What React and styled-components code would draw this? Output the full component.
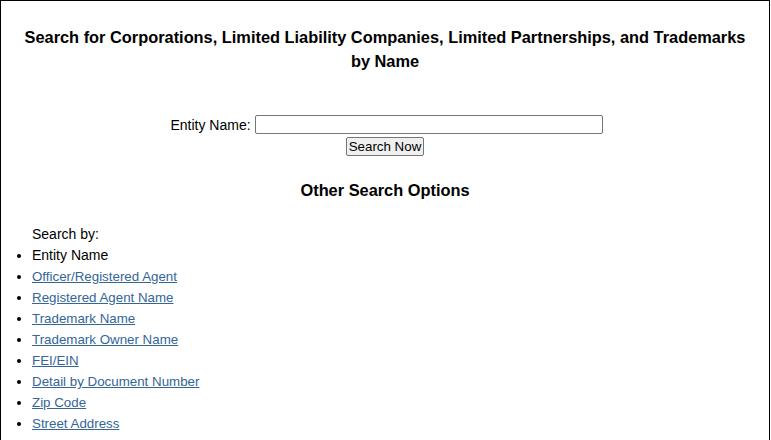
import React from "react";
import styled, { createGlobalStyle } from "styled-components";

const GlobalStyle = createGlobalStyle`
  body {
    margin: 0;
    background: #fff;
    font-family: "Liberation Sans", Arial, sans-serif;
    font-size: 14px;
    color: #000;
  }
`;

const links = [
  "Officer/Registered Agent",
  "Registered Agent Name",
  "Trademark Name",
  "Trademark Owner Name",
  "FEI/EIN",
  "Detail by Document Number",
  "Zip Code",
  "Street Address",
];

const App = () => {
  return (
    <>
      <GlobalStyle />
      <Page>
        <Title>
          Search for Corporations, Limited Liability Companies, Limited
          Partnerships, and Trademarks by Name
        </Title>
        <SearchForm onSubmit={(e) => e.preventDefault()}>
          <Field>
            <label htmlFor="entity">Entity Name:</label>
            <TextInput id="entity" type="text" />
          </Field>
          <SubmitButton type="submit">Search Now</SubmitButton>
        </SearchForm>
        <SubTitle>Other Search Options</SubTitle>
        <Options>
          <Option plain>Search by:</Option>
          <Option>Entity Name</Option>
          {links.map((l) => (
            <Option key={l}>
              <a href="#">{l}</a>
            </Option>
          ))}
        </Options>
      </Page>
    </>
  );
};

const Page = styled.div`
  width: 768px;
  height: 460px;
  border: 1px solid #000;
  padding-top: 24px;
  box-sizing: content-box;
`;

const Title = styled.h3`
  margin: 0 12px;
  font-size: 16.38px;
  line-height: 24px;
  font-weight: bold;
  text-align: center;
`;

const SearchForm = styled.form`
  display: flex;
  flex-direction: column;
  align-items: center;
  margin-top: 42px;
`;

const Field = styled.div`
  display: flex;
  align-items: center;
  gap: 4px;
  margin-left: 3px;

  label {
    font-size: 14px;
  }
`;

const TextInput = styled.input`
  width: 342px;
  height: 15px;
  padding: 1px 2px;
  border: 1px solid #767676;
  border-radius: 2px;
  font-size: 13px;
`;

const SubmitButton = styled.button`
  margin-top: 3px;
  padding: 0 2px;
  height: 19px;
  font-family: "Liberation Sans", Arial, sans-serif;
  font-size: 13.33px;
  color: #000;
  background: #efefef;
  border: 1px solid #767676;
  border-radius: 2px;
`;

const SubTitle = styled.h3`
  margin: 23px 0 0;
  font-size: 16.38px;
  line-height: 22px;
  font-weight: bold;
  text-align: center;
`;

const Options = styled.ul`
  margin: 23px 0 0;
  padding-left: 31px;
  font-size: 14px;
  line-height: 21px;

  a {
    font-size: 13.33px;
    color: #336699;
    text-decoration: underline;
  }
`;

const Option = styled.li`
  list-style: ${(p) => (p.plain ? "none" : "disc")};
`;

export default App;
